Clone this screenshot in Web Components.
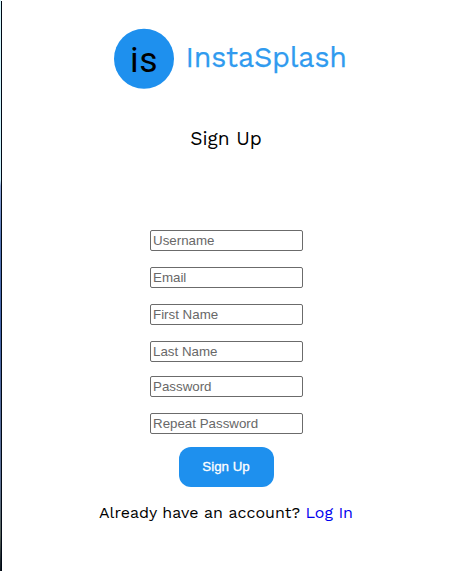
<!DOCTYPE html>
<html lang="en">
<head>
<meta charset="utf-8">
<title>InstaSplash</title>
<style>
html, body { margin: 0; height: 100%; background: #fff; overflow: hidden; }
</style>
</head>
<body>
<signup-page></signup-page>
<script>
const define = (name, html) => {
  const template = document.createElement('template');
  template.innerHTML = html;
  customElements.define(name, class extends HTMLElement {
    constructor() {
      super();
      this.attachShadow({ mode: 'open' }).append(template.content.cloneNode(true));
    }
  });
};

define('window-edge', `
<style>
:host { display: flex; width: 2px; flex: none; }
i { width: 1px; }
.glow { background: linear-gradient(#d5f6fc 0, #c9effa 180px, #8da5d8 186px, #5475b4 240px, #4263a8 330px, #536b9c 400px, #5d7196 480px, #59645c 535px, #202a30 560px, #101820 571px); }
.line { background: #000814; margin-top: 1px; }
</style><i class="glow"></i><i class="line"></i>`);

define('brand-logo', `
<style>
:host { display: block; height: 64px; }
svg { display: block; }
text { font-family: "Work Sans", Inter, sans-serif; }
.mark { font-family: Roboto, sans-serif; }
</style>
<svg width="236" height="64" viewBox="112 27 236 64">
<circle cx="144" cy="58.8" r="30" fill="#1e90ee"/>
<text class="mark" x="130" y="72.3" font-size="35.5" textLength="27.5" lengthAdjust="spacing">is</text>
<text x="185.5" y="66.5" font-size="28.6" fill="#309bef" stroke="#309bef" stroke-width=".25" textLength="161.5" lengthAdjust="spacing">InstaSplash</text>
</svg>`);

define('page-title', `
<style>
:host { display: block; font: 19.2px/24px "Work Sans", "Open Sans", sans-serif; white-space: nowrap; }
</style><slot></slot>`);

customElements.define('text-field', class extends HTMLElement {
  constructor() {
    super();
    this.attachShadow({ mode: 'open' }).innerHTML = `
<style>
:host { display: block; width: 153px; height: 21px; }
input { display: block; box-sizing: border-box; width: 100%; height: 100%; margin: 0; padding: 1px 2px; border: 1px solid #6b6b6b; border-radius: 2px; background: #fff; font: 13.33px "Liberation Sans", Arial, sans-serif; }
input::placeholder { color: #686868; opacity: 1; }
</style><input>`;
  }
  connectedCallback() {
    const input = this.shadowRoot.querySelector('input');
    input.placeholder = this.getAttribute('label');
    input.type = this.getAttribute('type') || 'text';
  }
});

define('submit-button', `
<style>
:host { display: block; }
button { display: block; width: 95px; height: 40px; padding: 0 1px 2px 0; border: 0; border-radius: 12px; background: #1e90ee; color: #fff; font: 13.33px "Liberation Sans", Arial, sans-serif; -webkit-text-stroke: .3px #fff; }
</style><button><slot></slot></button>`);

define('login-prompt', `
<style>
:host { display: block; font: 16px/20px "Work Sans", "Open Sans", sans-serif; white-space: nowrap; }
a { color: #0000ee; text-decoration: none; }
</style><slot></slot> <a href="#"><slot name="link"></slot></a>`);

define('signup-page', `
<style>
:host { display: flex; height: 100%; background: #fff; color: #000; }
main { flex: 1; display: flex; flex-direction: column; align-items: center; padding-top: 27px; }
brand-logo { margin-left: 9px; }
page-title { margin-top: 36px; margin-left: 1px; }
form { display: grid; gap: 16px; margin-top: 79px; margin-left: 2px; }
.tight { margin-top: -2px; }
submit-button { margin-top: 13px; margin-left: 2px; }
login-prompt { margin-top: 16px; margin-left: 1px; }
</style>
<window-edge></window-edge>
<main>
<brand-logo></brand-logo>
<page-title>Sign Up</page-title>
<form>
<text-field label="Username"></text-field>
<text-field label="Email"></text-field>
<text-field label="First Name"></text-field>
<text-field label="Last Name"></text-field>
<text-field class="tight" label="Password" type="password"></text-field>
<text-field label="Repeat Password" type="password"></text-field>
</form>
<submit-button>Sign Up</submit-button>
<login-prompt>Already have an account?<span slot="link">Log In</span></login-prompt>
</main>`);
</script>
</body>
</html>
